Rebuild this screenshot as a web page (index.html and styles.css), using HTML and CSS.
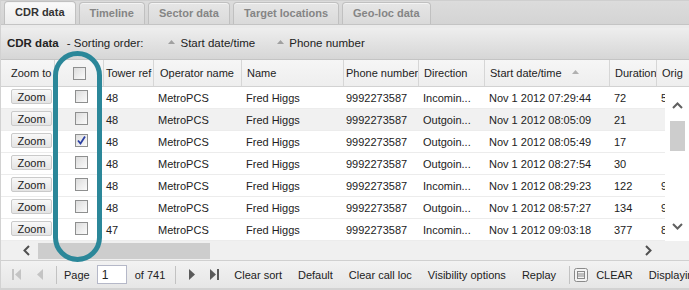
FILE: index.html
```html
<!DOCTYPE html>
<html lang="en">

<head>
  <meta charset="UTF-8" />
  <title>CDR data</title>
  <link rel="stylesheet" href="styles.css">
</head>

<body>
  <div class="panel">
    <div class="tabs">
      <div class="tab active">CDR data</div>
      <div class="tab">Timeline</div>
      <div class="tab">Sector data</div>
      <div class="tab">Target locations</div>
      <div class="tab">Geo-loc data</div>
    </div>
    <div class="tab-rule"></div>

    <div class="toolbar">
      <b>CDR data</b>
      <span class="sort-label">- Sorting order:</span>
      <span class="sort-item"><svg width="7" height="4" viewBox="0 0 7 4"><path d="M0 4 L3.5 0 L7 4 Z" fill="#a0a0a0"/></svg>Start date/time</span>
      <span class="sort-item"><svg width="7" height="4" viewBox="0 0 7 4"><path d="M0 4 L3.5 0 L7 4 Z" fill="#a0a0a0"/></svg>Phone number</span>
    </div>

    <div class="grid-head">
      <div class="hcell first">Zoom to</div>
      <div class="hcell center"><span class="check"></span></div>
      <div class="hcell tight">Tower ref</div>
      <div class="hcell wide">Operator name</div>
      <div class="hcell">Name</div>
      <div class="hcell tight">Phone number</div>
      <div class="hcell">Direction</div>
      <div class="hcell">Start date/time <svg class="head-sort" width="7" height="4" viewBox="0 0 7 4"><path d="M0 4 L3.5 0 L7 4 Z" fill="#b0b0b0"/></svg></div>
      <div class="hcell">Duration</div>
      <div class="hcell">Orig</div>
    </div>

    <div class="grid-body">
      <div class="rows" id="rows"></div>
      <div class="vscroll">
        <svg class="arrow" width="17" height="17" viewBox="0 0 17 17"><polyline points="4,11 8.5,6.5 13,11" fill="none" stroke="#606060" stroke-width="2"/></svg>
        <div class="vthumb"></div>
        <div class="spacer"></div>
        <svg class="arrow" width="17" height="17" viewBox="0 0 17 17"><polyline points="4,6 8.5,10.5 13,6" fill="none" stroke="#606060" stroke-width="2"/></svg>
      </div>
    </div>

    <div class="hscroll">
      <svg class="arrow" width="17" height="17" viewBox="0 0 17 17"><polyline points="11,4 6.5,8.5 11,13" fill="none" stroke="#505050" stroke-width="2"/></svg>
      <div class="hthumb"></div>
      <div class="spacer"></div>
      <svg class="arrow" width="17" height="17" viewBox="0 0 17 17"><polyline points="6,4 10.5,8.5 6,13" fill="none" stroke="#505050" stroke-width="2"/></svg>
    </div>

    <div class="pager">
      <svg class="first" width="9" height="11" viewBox="0 0 9 11"><rect x="0" y="0" width="2" height="11" fill="#c4c4c4"/><path d="M9 0 L3 5.5 L9 11 Z" fill="#c4c4c4"/></svg>
      <svg class="prev" width="6" height="11" viewBox="0 0 6 11"><path d="M6 0 L0 5.5 L6 11 Z" fill="#c4c4c4"/></svg>
      <span class="sep sep-page"></span>
      <span class="page-label">Page</span>
      <span class="page-input">1</span>
      <span class="of">of 741</span>
      <span class="sep sep-nav"></span>
      <svg class="next" width="6" height="11" viewBox="0 0 6 11"><path d="M0 0 L6 5.5 L0 11 Z" fill="#5a5a5a"/></svg>
      <svg class="last" width="9" height="11" viewBox="0 0 9 11"><path d="M0 0 L6 5.5 L0 11 Z" fill="#5a5a5a"/><rect x="7" y="0" width="2" height="11" fill="#5a5a5a"/></svg>
      <span class="pbtn">Clear sort</span>
      <span class="pbtn">Default</span>
      <span class="pbtn">Clear call loc</span>
      <span class="pbtn">Visibility options</span>
      <span class="pbtn">Replay</span>
      <span class="sep sep-clear"></span>
      <svg class="clear-icon" width="14" height="14" viewBox="0 0 14 14"><rect x="0.5" y="0.5" width="13" height="13" rx="2" fill="#f4f4f4" stroke="#8a8a8a"/><rect x="3.5" y="3.5" width="7" height="7" fill="none" stroke="#8a8a8a"/><line x1="4" y1="6" x2="10" y2="6" stroke="#8a8a8a"/><line x1="4" y1="8" x2="10" y2="8" stroke="#8a8a8a"/></svg>
      <span class="pbtn">CLEAR</span>
      <span class="pbtn">Displaying 1 - 7 of 5184</span>
    </div>

    <div class="ring"></div>
  </div>

  <script>
    const calls = [
      ["48", "Incomin...", "Nov 1 2012 07:29:44", "72", "5"],
      ["48", "Outgoin...", "Nov 1 2012 08:05:09", "21", ""],
      ["48", "Outgoin...", "Nov 1 2012 08:05:49", "17", ""],
      ["48", "Outgoin...", "Nov 1 2012 08:27:54", "30", ""],
      ["48", "Incomin...", "Nov 1 2012 08:29:23", "122", "9"],
      ["48", "Outgoin...", "Nov 1 2012 08:57:27", "134", "9"],
      ["47", "Incomin...", "Nov 1 2012 09:03:18", "377", "8"],
    ];

    const rows = document.getElementById("rows");
    calls.forEach((c, i) => {
      const row = document.createElement("div");
      row.className = "row" + (i === 1 ? " over" : "");
      row.innerHTML =
        '<div class="cell"><span class="zoom-btn">Zoom</span></div>' +
        '<div class="cell center"><span class="check' + (i === 2 ? " checked" : "") + '">' +
        (i === 2 ? '<svg width="11" height="11" viewBox="0 0 11 11"><polyline points="2,5.5 4.5,8.5 9,1.5" fill="none" stroke="#2b3fa3" stroke-width="1.8"/></svg>' : "") +
        '</span></div>' +
        '<div class="cell tight">' + c[0] + '</div>' +
        '<div class="cell wide">MetroPCS</div>' +
        '<div class="cell">Fred Higgs</div>' +
        '<div class="cell tight">9992273587</div>' +
        '<div class="cell">' + c[1] + '</div>' +
        '<div class="cell">' + c[2] + '</div>' +
        '<div class="cell">' + c[3] + '</div>' +
        '<div class="cell">' + c[4] + '</div>';
      rows.appendChild(row);
    });
  </script>
</body>

</html>
```

FILE: styles.css
```css
body {
  margin: 0;
  background-color: #d2d2d2;
  font-family: "Liberation Sans", Arial, sans-serif;
  font-size: 11px;
  color: #222;
}

.panel {
  position: relative;
  width: 688px;
  height: 288px;
  margin-left: 1px;
  display: flex;
  flex-direction: column;
  overflow: hidden;
  background-color: #fff;
}

/* tabs */
.tabs {
  height: 24px;
  box-sizing: border-box;
  display: flex;
  align-items: flex-end;
  gap: 3px;
  padding-left: 3px;
  background: linear-gradient(#dcdcdc, #d4d4d4);
  border-top: 1px solid #cfcfcf;
}

.tab {
  height: 21px;
  line-height: 21px;
  padding: 0 10px;
  border: 1px solid #c0c0c0;
  border-bottom: none;
  border-radius: 4px 4px 0 0;
  background: linear-gradient(#e6e6e6, #dadada);
  box-shadow: inset 0 1px #f4f4f4;
  color: #858585;
  font-weight: bold;
  font-size: 11px;
}

.tab.active {
  height: 22px;
  background: linear-gradient(#fafafa, #ececec);
  color: #333;
}

.tab-rule {
  height: 3px;
  background-color: #ebebeb;
  border-top: 1px solid #c4c4c4;
}

/* toolbar */
.toolbar {
  height: 31px;
  display: flex;
  align-items: center;
  padding-left: 6px;
  background: linear-gradient(#eeeeee, #d6d6d6);
  border-bottom: 1px solid #c4c4c4;
  font-size: 11.5px;
}

.sort-label {
  margin-left: 8px;
}

.sort-item {
  display: flex;
  align-items: center;
  gap: 5px;
  margin-left: 25px;
}

.sort-item + .sort-item {
  margin-left: 22px;
}

.sort-item svg {
  margin-top: -2px;
}

/* grid */
.grid-head,
.row {
  display: grid;
  grid-template-columns: 53px 49px 50px 88px 102px 75px 66px 125px 47px 60px;
}

.grid-head {
  height: 27px;
  background: linear-gradient(#f6f6f6, #eeeeee);
  border-bottom: 1px solid #d2d2d2;
  overflow: hidden;
}

.hcell {
  display: flex;
  align-items: center;
  padding-left: 5px;
  border-left: 1px solid #d6d6d6;
  white-space: nowrap;
  overflow: hidden;
}

.hcell.first {
  padding-left: 10px;
  border-left: none;
}

.tight {
  padding-left: 2px;
}

.wide {
  padding-left: 6px;
}

.head-sort {
  margin-left: 10px;
  margin-top: -2px;
}

.center {
  justify-content: center;
  padding-left: 0;
}

.grid-body {
  display: flex;
  height: 154px;
}

.rows {
  width: 664px;
  overflow: hidden;
}

.row {
  height: 21px;
  border-bottom: 1px solid #ececec;
  background-color: #fff;
}

.row.over {
  background-color: #f1f1f1;
}

.cell {
  display: flex;
  align-items: center;
  padding-left: 5px;
  white-space: nowrap;
  overflow: hidden;
}

.cell.tight {
  padding-left: 3px;
}

.zoom-btn {
  width: 41px;
  height: 15px;
  line-height: 15px;
  box-sizing: border-box;
  margin-left: 5px;
  margin-top: -3px;
  text-align: center;
  border: 1px solid #cacaca;
  border-radius: 2px;
  background: linear-gradient(#f8f8f8, #e4e4e4);
  color: #222;
}

.check {
  width: 13px;
  height: 13px;
  box-sizing: border-box;
  border: 1px solid #8e8f8f;
  background: linear-gradient(135deg, #dcdcdc, #fbfbfb);
  display: flex;
  align-items: center;
  justify-content: center;
}

.row .check {
  margin-top: -2px;
}

.vscroll {
  width: 24px;
  display: flex;
  flex-direction: column;
  align-items: center;
  padding: 10px 0 6px;
  box-sizing: border-box;
  background-color: #fff;
}

.vthumb {
  width: 15px;
  height: 30px;
  margin-top: 7px;
  background-color: #cdcdcd;
}

.spacer {
  flex: 1;
}

.arrow {
  display: block;
}

.hscroll {
  height: 19px;
  display: flex;
  align-items: center;
  padding: 0 32px 0 17px;
  background-color: #f0f0f0;
}

.hthumb {
  width: 172px;
  height: 16px;
  margin-left: 3px;
  margin-top: 1px;
  background-color: #cdcdcd;
}

/* pager */
.pager {
  height: 27px;
  display: flex;
  align-items: center;
  padding-left: 11px;
  background: linear-gradient(#f2f2f2, #e6e6e6);
  border-top: 1px solid #d0d0d0;
  white-space: nowrap;
  font-size: 11px;
  color: #222;
}

.pager > * {
  flex-shrink: 0;
}

.pager .prev {
  margin-left: 16px;
}

.sep {
  width: 1px;
  height: 18px;
  background-color: #c2c2c2;
}

.sep-page {
  margin: 0 7px 0 13px;
}

.sep-nav {
  margin: 0 13px 0 10px;
}

.sep-clear {
  margin: 0 4px 0 5px;
}

.page-input {
  width: 30px;
  height: 19px;
  line-height: 19px;
  box-sizing: border-box;
  margin-left: 7px;
  padding-left: 4px;
  background-color: #fff;
  border: 1px solid #b5b8c8;
  font-size: 12px;
}

.of {
  margin-left: 8px;
}

.pager .last {
  margin-left: 15px;
}

.pbtn {
  padding: 0 8px;
}

.pager .last + .pbtn {
  margin-left: 7px;
}

/* annotation drawn over the checkbox column */
.ring {
  position: absolute;
  left: 52px;
  top: 51px;
  width: 49px;
  height: 211px;
  box-sizing: border-box;
  border: 5px solid #2b8799;
  border-radius: 25px;
}
```
